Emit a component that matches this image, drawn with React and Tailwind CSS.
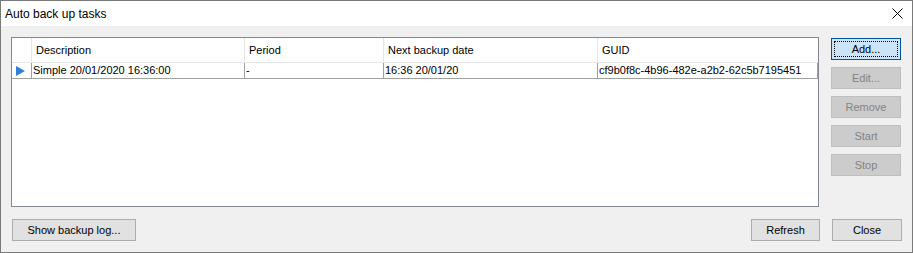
import React from 'react';

// Column layout of the tasks grid (widths include the right divider line)
const columns = [
  { key: 'description', title: 'Description', width: 'w-[213px]' },
  { key: 'period', title: 'Period', width: 'w-[139px]' },
  { key: 'next', title: 'Next backup date', width: 'w-[214px]' },
  { key: 'guid', title: 'GUID', width: 'w-[220px]' },
];

const rows = [
  {
    description: 'Simple 20/01/2020 16:36:00',
    period: '-',
    next: '16:36 20/01/20',
    guid: 'cf9b0f8c-4b96-482e-a2b2-62c5b7195451',
  },
];

// Win10 style push button
const WinButton = ({ children, disabled, focused, className = '' }) => {
  if (focused) {
    return (
      <button className={`relative h-[22px] bg-[#cce4f7] border border-[#005499] text-black ${className}`}>
        <span className="absolute inset-[2px] border border-dotted border-black"></span>
        <span className="relative">{children}</span>
      </button>
    );
  }
  return (
    <button
      disabled={disabled}
      className={`h-[22px] border ${
        disabled ? 'bg-[#cccccc] border-[#bfbfbf] text-[#838383]' : 'bg-[#e1e1e1] border-[#adadad] text-black'
      } ${className}`}
    >
      {children}
    </button>
  );
};

const App = () => {
  return (
    <div
      className="w-[913px] h-[253px] flex flex-col border border-[#7a7a7a] bg-[#f0f0f0] text-[11px] text-black"
      style={{ fontFamily: '"Liberation Sans", Arial, sans-serif' }}
    >
      {/* Title bar */}
      <div className="h-[25px] bg-white flex items-center justify-between pl-[4px] pr-[9px]">
        <span className="text-[12px]">Auto back up tasks</span>
        <svg width="11" height="11" viewBox="0 0 11 11">
          <path d="M0.5 0.5 L10.5 10.5 M10.5 0.5 L0.5 10.5" stroke="#000" strokeWidth="1" fill="none" />
        </svg>
      </div>

      {/* Body */}
      <div className="flex-1 flex flex-col pt-[11px] pb-[11px]">
        <div className="flex pl-[10px] pr-[11px] gap-[12px]">
          {/* Tasks grid */}
          <div className="w-[808px] h-[170px] border border-[#828790] bg-white">
            <div className="flex h-[25px] border-b border-[#e5e5e5]">
              <div className="w-[20px] border-r border-[#e5e5e5]"></div>
              {columns.map((c) => (
                <div key={c.key} className={`${c.width} flex items-center pl-[4px] border-r border-[#e5e5e5] last:border-r-0`}>
                  {c.title}
                </div>
              ))}
            </div>
            {rows.map((r, i) => (
              <div key={i} className="flex h-[16px] border-b border-[#a0a0a0]">
                <div className="w-[20px] border-r border-[#a0a0a0] flex items-center pl-[4px]">
                  <svg width="9" height="10" viewBox="0 0 9 10">
                    <polygon points="0,0 9,5 0,10" fill="#2f7ed8" />
                  </svg>
                </div>
                {columns.map((c) => (
                  <div key={c.key} className={`${c.width} flex items-center pl-[1px] border-r border-[#a0a0a0] whitespace-nowrap overflow-hidden`}>
                    {r[c.key]}
                  </div>
                ))}
              </div>
            ))}
          </div>

          {/* Side buttons */}
          <div className="flex flex-col gap-[7px] mt-[1px]">
            <WinButton focused className="w-[70px]">Add...</WinButton>
            <WinButton disabled className="w-[70px]">Edit...</WinButton>
            <WinButton disabled className="w-[70px]">Remove</WinButton>
            <WinButton disabled className="w-[70px]">Start</WinButton>
            <WinButton disabled className="w-[70px]">Stop</WinButton>
          </div>
        </div>

        {/* Bottom buttons */}
        <div className="flex items-center justify-between mt-[12px] pl-[11px] pr-[10px]">
          <WinButton className="w-[124px]">Show backup log...</WinButton>
          <div className="flex gap-[12px]">
            <WinButton className="w-[69px]">Refresh</WinButton>
            <WinButton className="w-[70px]">Close</WinButton>
          </div>
        </div>
      </div>
    </div>
  );
};

export default App;
